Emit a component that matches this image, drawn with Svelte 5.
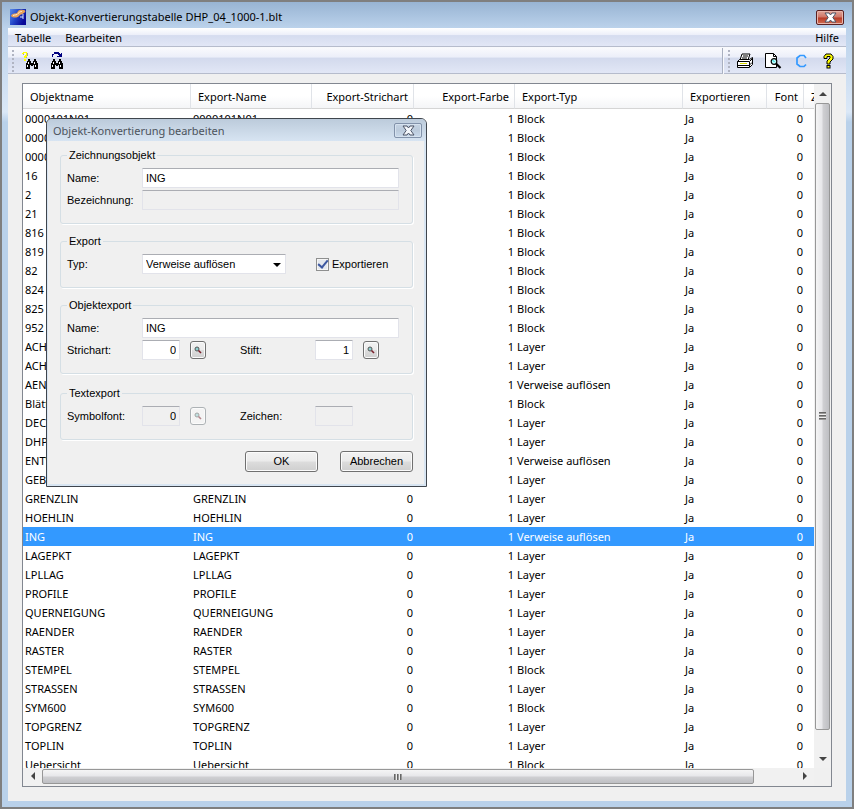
<script>
  const block = 'Block';
  const layer = 'Layer';
  const resolve = 'Verweise auflösen';

  const rows = [
    ['0000101N01', block],
    ['0000101N02', block],
    ['0000101N03', block],
    ['16', block],
    ['2', block],
    ['21', block],
    ['816', block],
    ['819', block],
    ['82', block],
    ['824', block],
    ['825', block],
    ['952', block],
    ['ACHSEN', layer],
    ['ACHSPKT', layer],
    ['AENDERUNG', resolve],
    ['Blättschnitt', block],
    ['DECKE', layer],
    ['DHPKT', layer],
    ['ENTWURF', resolve],
    ['GEBAEUDE', layer],
    ['GRENZLIN', layer],
    ['HOEHLIN', layer],
    ['ING', resolve],
    ['LAGEPKT', layer],
    ['LPLLAG', layer],
    ['PROFILE', layer],
    ['QUERNEIGUNG', layer],
    ['RAENDER', layer],
    ['RASTER', layer],
    ['STEMPEL', block],
    ['STRASSEN', layer],
    ['SYM600', block],
    ['TOPGRENZ', layer],
    ['TOPLIN', layer],
    ['Uebersicht', block]
  ];

  let selected = $state(22);
  let objectName = $state('ING');
  let exportName = $state('ING');
  let exporting = $state(true);
</script>

{#snippet binoculars()}
  <path d="M5 6h2v2h1v2h2v-2h1v-2h2v2h1v2h1v6h-4v-4h-1v1h-2v-1h-1v4h-4v-6h1v-2h1z" fill="#000" />
  <path d="M5 9h1v2h-1zM11 9h1v2h-1zM4 12h1v2h-1zM12 12h1v2h-1z" fill="#fff" />
{/snippet}

{#snippet cross(fill)}
  <svg width="13" height="11" viewBox="0 0 13 11" aria-hidden="true">
    <path d="M1 1h4l1.500 2 1.500-2h4l-3.200 4.500 3.200 4.500h-4l-1.500-2-1.500 2h-4l3.200-4.500z" {fill} stroke="#4d5467" stroke-width="1" />
  </svg>
{/snippet}

{#snippet magnifier()}
  <svg width="8" height="8" viewBox="0 0 8 8" aria-hidden="true">
    <circle cx="3" cy="3" r="2" fill="#8fd0d0" stroke="#555" />
    <path d="M4.500 4.500l2.500 2.500" stroke="#7c1f2a" stroke-width="1.600" />
  </svg>
{/snippet}

<div class="window">
  <header class="titlebar">
    <svg width="16" height="16" viewBox="0 0 16 16" aria-hidden="true">
      <defs>
        <linearGradient id="logo-blue" x1="0" y1="0" x2="1" y2="0.500">
          <stop offset="0" stop-color="#5a8ce8" />
          <stop offset="0.500" stop-color="#2346c8" />
          <stop offset="1" stop-color="#0a0a98" />
        </linearGradient>
      </defs>
      <rect width="16" height="16" fill="url(#logo-blue)" />
      <path d="M1 7c1-3 4-2 6-3 1-3 3-4 6-3 3 0 3 2 1 3-2 2-4 1-5 3-2 2-6 2-8 0z" fill="#e8a058" />
      <path d="M3 6.500c2-1 4 0 5-2 2-2 3-2 4-2" fill="none" stroke="#fff0d8" />
      <path d="M10 8h3M13 5v5" stroke="#dce6ff" />
    </svg>
    <h1>Objekt-Konvertierungstabelle DHP_04_1000-1.blt</h1>
    <button class="close main-close" aria-label="Schließen">{@render cross('#fff')}</button>
  </header>

  <nav class="menu">
    <button>Tabelle</button>
    <button>Bearbeiten</button>
    <button class="help">Hilfe</button>
  </nav>

  <div class="toolbar">
    <div class="band grow">
      <span class="grip"></span>
      <button aria-label="Suchen">
        <svg width="18" height="18" viewBox="0 0 18 18" shape-rendering="crispEdges" aria-hidden="true">
          <path d="M1 0h4v1h1v3h-1v1h-1v1h-2v-2h1v-1h1v-2h-2v1h-2v-1h1zM2 7h2v2h-2z" fill="#ff0" />
          <path d="M5 1h1v3h-1zM0 3h1v-1h1v1zM4 5h1v1h-1z" fill="#a8a890" />
          <g transform="translate(1 1)">{@render binoculars()}</g>
        </svg>
      </button>
      <button aria-label="Weitersuchen">
        <svg width="18" height="18" viewBox="0 0 18 18" shape-rendering="crispEdges" aria-hidden="true">
          <path d="M6 0h5v1h1v1h1v-1h1v4h-5v-1h2v-1h-1v-1h-4v1h-1v2h-1v-3h2z" fill="#000080" />
          <g transform="translate(0 1)">{@render binoculars()}</g>
        </svg>
      </button>
    </div>
    <div class="band tools">
      <span class="grip"></span>
      <button aria-label="Drucken">
        <svg width="18" height="18" viewBox="0 0 18 18" aria-hidden="true">
          <path d="M6 2h8l-2 6h-8z" fill="#fff" stroke="#000" />
          <path d="M7 4h5M6 6h5" stroke="#000" />
          <path d="M1.500 9.500l2-2h10l3-2v7l-3 3h-12z" fill="#fff" stroke="#000" />
          <path d="M1.500 9.500h12l3-3M13.500 10v5M2 13.500h11l3-3" fill="none" stroke="#000" />
          <path d="M4 11.500h7" stroke="#d8d800" />
          <path d="M3 15.500h10" stroke="#000" />
        </svg>
      </button>
      <button aria-label="Seitenansicht">
        <svg width="18" height="18" viewBox="0 0 18 18" aria-hidden="true">
          <path d="M1.500 1.500h8l3 3v11h-11z" fill="#fff" stroke="#000" />
          <path d="M9.500 1.500v3h3" fill="none" stroke="#000" />
          <circle cx="10" cy="9.500" r="2.800" fill="#bff" stroke="#000" stroke-width="1.200" />
          <path d="M8.500 8.500l2 1" stroke="#0cc" />
          <path d="M12 11.500l4.500 4.500" stroke="#000" stroke-width="2.200" />
        </svg>
      </button>
      <button aria-label="Aktualisieren">
        <svg width="18" height="18" viewBox="0 0 18 18" aria-hidden="true">
          <path d="M14 6l-2-2.500h-4l-3 2.500v6l3 2.500h4l2-2" fill="none" stroke="#3399ff" stroke-width="1.700" />
        </svg>
      </button>
      <button aria-label="Hilfe anzeigen">
        <svg width="18" height="18" viewBox="0 0 18 18" aria-hidden="true">
          <path d="M4 6.500v-2l2-2.500h5l2 2.500v2.500l-3 3v2h-3v-3l3-3v-1.500h-3v2z" fill="#ff0" stroke="#000" />
          <rect x="7" y="13.500" width="3" height="2.500" fill="#ff0" stroke="#000" />
        </svg>
      </button>
    </div>
  </div>

  <main>
    <div class="list">
      <div class="viewport">
        <table>
          <colgroup>
            <col class="c-object" /><col class="c-name" /><col class="c-line" /><col class="c-color" />
            <col class="c-object" /><col class="c-export" /><col class="c-font" /><col class="c-char" />
          </colgroup>
          <thead>
            <tr>
              <th>Objektname</th>
              <th>Export-Name</th>
              <th class="num">Export-Strichart</th>
              <th class="num">Export-Farbe</th>
              <th>Export-Typ</th>
              <th>Exportieren</th>
              <th class="num">Font</th>
              <th>Zeichen</th>
            </tr>
          </thead>
          <tbody>
            {#each rows as [name, type], i}
              <tr class:selected={i === selected} onclick={() => (selected = i)}>
                <td>{name}</td>
                <td>{name}</td>
                <td class="num">0</td>
                <td class="num">1</td>
                <td>{type}</td>
                <td>Ja</td>
                <td class="num">0</td>
                <td></td>
              </tr>
            {/each}
          </tbody>
        </table>
      </div>
      <div class="vscroll">
        <span class="arrow up"></span>
        <div class="track"><div class="thumb"><i></i></div></div>
        <span class="arrow down"></span>
      </div>
      <div class="hscroll">
        <span class="arrow left"></span>
        <div class="track"><div class="thumb"><i></i></div></div>
        <span class="arrow right"></span>
      </div>
      <div class="corner"></div>
    </div>
  </main>

  <div class="dialog" role="dialog" aria-labelledby="dialog-title">
    <div class="dialog-bar">
      <h2 id="dialog-title">Objekt-Konvertierung bearbeiten</h2>
      <button class="close" aria-label="Dialog schließen">{@render cross('#f4f7fb')}</button>
    </div>
    <form onsubmit={(e) => e.preventDefault()}>
      <fieldset>
        <legend>Zeichnungsobjekt</legend>
        <div class="row">
          <label for="obj-name">Name:</label>
          <input id="obj-name" type="text" class="wide" bind:value={objectName} />
        </div>
        <div class="row">
          <label for="obj-desc">Bezeichnung:</label>
          <input id="obj-desc" type="text" class="wide" disabled />
        </div>
      </fieldset>
      <fieldset>
        <legend>Export</legend>
        <div class="row">
          <label for="exp-type">Typ:</label>
          <div class="select">
            <select id="exp-type">
              <option>Verweise auflösen</option>
              <option>Block</option>
              <option>Layer</option>
            </select>
          </div>
          <label class="check"><input type="checkbox" bind:checked={exporting} />Exportieren</label>
        </div>
      </fieldset>
      <fieldset>
        <legend>Objektexport</legend>
        <div class="row">
          <label for="exp-name">Name:</label>
          <input id="exp-name" type="text" class="wide" bind:value={exportName} />
        </div>
        <div class="row">
          <label for="line">Strichart:</label>
          <input id="line" type="text" class="short" value="0" />
          <button type="button" class="pick" aria-label="Strichart wählen">{@render magnifier()}</button>
          <label for="pen" class="second">Stift:</label>
          <input id="pen" type="text" class="short" value="1" />
          <button type="button" class="pick" aria-label="Stift wählen">{@render magnifier()}</button>
        </div>
      </fieldset>
      <fieldset class="text-export">
        <legend>Textexport</legend>
        <div class="row">
          <label for="symbol">Symbolfont:</label>
          <input id="symbol" type="text" class="short" value="0" disabled />
          <button type="button" class="pick" aria-label="Symbolfont wählen" disabled>{@render magnifier()}</button>
          <label for="char" class="second">Zeichen:</label>
          <input id="char" type="text" class="short" disabled />
        </div>
      </fieldset>
      <div class="actions">
        <button type="submit">OK</button>
        <button type="button">Abbrechen</button>
      </div>
    </form>
  </div>
</div>

<style>
  :global(body) { margin: 0; }
  .window, .window * { box-sizing: border-box; }
  .window {
    position: relative;
    display: flex;
    flex-direction: column;
    height: 100vh;
    padding: 0 6px 6px;
    border: 2px solid #7f7f7f;
    background: linear-gradient(#98b4d3, #bbd2eb 26px, #dbe8f7 110px, #b9d1ea 120px);
    font: 11px/16px "Noto Sans", "Open Sans", sans-serif;
    color: #000;
  }
  button { font: inherit; color: inherit; padding: 0; border: 0; background: none; }
  svg { display: block; }

  .titlebar { display: flex; align-items: center; gap: 4px; height: 26px; padding: 4px 2px 0; }
  h1, h2 { margin: 0; font-size: 11px; font-weight: 400; line-height: 16px; flex: 1; }
  .close {
    display: flex; align-items: center; justify-content: center;
    width: 28px; height: 15px;
    border: 1px solid #8292aa; border-radius: 2px;
    background: linear-gradient(#c5d3e3, #bccbdc 50%, #c9d9eb);
    box-shadow: inset 0 0 0 1px #d6e2ef;
  }
  .main-close {
    border-color: #5b2020;
    background: linear-gradient(#e0a498, #cf7465 48%, #b83a26 52%, #cf6d52);
    box-shadow: inset 0 0 0 1px #e8b5ab;
  }

  .menu {
    display: flex; height: 19px; padding: 2px 7px 0; gap: 14px;
    border-bottom: 1px solid #b6bccc;
    background: linear-gradient(#fff, #eceff9 38%, #d5dcef 42%, #e2e7f6);
  }
  .help { margin-left: auto; }
  .toolbar {
    display: flex; height: 27px; padding-top: 1px;
    background: #f8f9fc;
  }
  .band {
    display: flex; align-items: center; gap: 8px; padding: 0 8px 0 4px;
    border-bottom: 1px solid #b6bccc;
    background: linear-gradient(#f9fafd, #eceff9 35%, #d3daed 42%, #e2e7f6);
  }
  .grow { flex: 1; border-right: 1px solid #a9b0c0; margin-right: 1px; }
  .tools { gap: 10px; }
  .grip {
    width: 2px; height: 22px;
    background: repeating-linear-gradient(#b0b4c2 0 2px, transparent 2px 4px);
  }
  .tools .grip { margin-right: -4px; }

  main { flex: 1; min-height: 0; display: flex; padding: 9px 14px 14px; background: #f0f0f0; }
  .list {
    flex: 1; min-width: 0; display: grid;
    grid-template: minmax(0, 1fr) 18px / minmax(0, 1fr) 17px;
    border: 1px solid #828790; background: #fff;
  }
  .viewport { overflow: hidden; }
  table { width: 856px; table-layout: fixed; border-collapse: separate; border-spacing: 0; }
  .c-object { width: 168px; }
  .c-name { width: 121px; }
  .c-line { width: 102px; }
  .c-color { width: 101px; }
  .c-export { width: 84px; }
  .c-font { width: 37px; }
  .c-char { width: 75px; }
  th {
    height: 25px; padding: 2px 5px 0 7px; text-align: left; font-weight: 400; white-space: nowrap;
    border-right: 1px solid #e0e3e8; border-bottom: 1px solid #d5d5d5;
    background: linear-gradient(#fff 50%, #f4f5f7);
  }
  td { height: 19px; padding: 0 2px; white-space: nowrap; line-height: 19px; }
  .num { text-align: right; }
  td.num { padding-right: 1px; }
  .selected td { background: #3399ff; color: #fff; }

  .vscroll { display: flex; flex-direction: column; background: #f1f1f1; }
  .hscroll { display: flex; background: #f1f1f1; }
  .corner { background: #f0f0f0; }
  .track { flex: 1; display: flex; min-width: 0; min-height: 0; }
  .vscroll .track { flex-direction: column; padding: 0 1px; }
  .hscroll .track { padding: 1px 0 2px; }
  .thumb { display: flex; align-items: center; justify-content: center; border: 1px solid #979797; border-radius: 2px; }
  .vscroll .thumb { height: 97%; background: linear-gradient(90deg, #f5f5f5, #e7e7ea 45%, #cfcfd2 55%, #bebfc3); }
  .hscroll .thumb { width: 94.5%; background: linear-gradient(#f5f5f5, #e7e7ea 45%, #cfcfd2 55%, #bebfc3); }
  .thumb i { width: 8px; height: 8px; }
  .hscroll i { background: repeating-linear-gradient(90deg, #666 0 1px, #999 1px 2px, #eee 2px 3px); height: 6px; }
  .vscroll i { background: repeating-linear-gradient(#666 0 1px, #999 1px 2px, #eee 2px 3px); width: 7px; }
  .arrow { display: flex; align-items: center; justify-content: center; width: 19px; height: 19px; }
  .vscroll .arrow { width: 17px; }
  .hscroll .arrow { height: 16px; }
  .arrow::before { content: ""; border: 4px solid transparent; }
  .up::before { border-top: 0; border-bottom-color: #444; }
  .down::before { border-bottom: 0; border-top-color: #444; }
  .left::before { border-left: 0; border-right-color: #444; }
  .right::before { border-right: 0; border-left-color: #444; }

  .dialog {
    position: absolute; left: 44px; top: 116px; width: 381px;
    border: 1px solid #3f454d; border-radius: 6px 6px 0 0;
    background: #f0f0f0;
    box-shadow: inset -2px -2px 0 #d8e5f2, inset 1px 0 0 #d8e5f2;
    font: 11px/13px "Liberation Sans", Arial, sans-serif;
  }
  .dialog-bar {
    display: flex; align-items: center; height: 22px; padding: 1px 4px 0 6px;
    border-radius: 5px 5px 0 0;
    background: linear-gradient(#bccbdb, #d7e4f2);
  }
  h2 { font-family: "Noto Sans", "Open Sans", sans-serif; color: #4c535c; }
  form { display: flex; flex-direction: column; gap: 11px; padding: 8px 13px 14px; }
  fieldset {
    display: block; min-width: 0; margin: 0; padding: 6px 13px 13px 6px;
    border: 1px solid #d5dfe5; border-radius: 3px;
    box-shadow: inset 0 -1px 0 #fff, 1px 0 0 #fff;
  }
  .text-export { margin-top: 2px; }
  fieldset { box-shadow: 1px 1px 0 #fff; }
  legend { padding: 0 2px; height: 13px; }
  .row { display: flex; align-items: center; }
  .row + .row { margin-top: 2px; }
  .row > label { width: 75px; }
  input[type="text"], select {
    height: 20px; margin: 0; padding: 0 3px;
    border: 1px solid #e2e3ea; border-top-color: #abadb3; border-radius: 1px;
    background: #fff; color: #000; font: inherit;
  }
  input[type="text"]:disabled { background: #f0f0f0; }
  .wide { flex: 1; min-width: 0; }
  input.short { width: 38px; text-align: right; }
  .select { position: relative; width: 144px; height: 20px; }
  select { display: block; appearance: none; width: 100%; }
  .select::after {
    content: ""; position: absolute; right: 5px; top: 9px;
    border: 4px solid transparent; border-top-color: #000; border-bottom: 0;
    pointer-events: none;
  }
  .row > .check { display: flex; align-items: center; gap: 3px; width: auto; margin-left: 30px; }
  .check input {
    appearance: none; width: 13px; height: 13px; margin: 0;
    border: 1px solid #8e8f8f; background: #e4e8ee;
    box-shadow: inset 0 0 0 1px #f6f6f6;
    display: flex; align-items: center; justify-content: center;
  }
  .check input:checked::before {
    content: ""; width: 4px; height: 8px; margin-top: -2px;
    border: solid #3c57a0; border-width: 0 2px 2px 0; transform: rotate(40deg);
  }
  .pick {
    display: flex; align-items: center; justify-content: center;
    width: 16px; height: 18px; margin-left: 10px;
  }
  .row > .second { margin-left: 34px; }
  .pick, .actions button {
    border: 1px solid #707070; border-radius: 3px;
    background: linear-gradient(#f2f2f2, #ebebeb 49%, #dddddd 51%, #cfcfcf);
    box-shadow: inset 0 0 0 1px #fbfbfb;
  }
  .pick:disabled { border-color: #adb2b5; background: #f4f4f4; }
  .pick:disabled svg { opacity: 0.5; }
  .actions { display: flex; justify-content: flex-end; gap: 22px; }
  .actions button { width: 73px; height: 21px; }
</style>
